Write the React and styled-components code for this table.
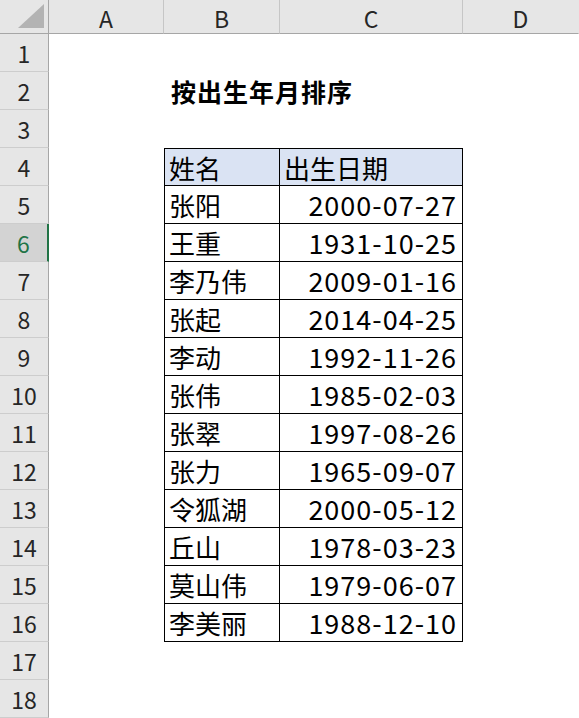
import React from 'react';
import styled, { createGlobalStyle } from 'styled-components';

const GlobalStyle = createGlobalStyle`
  html, body {
    margin: 0;
    padding: 0;
    background: #ffffff;
    overflow: hidden;
  }
`;

const FONT = `"Noto Sans CJK SC", "Noto Sans", sans-serif`;

const Sheet = styled.div`
  display: grid;
  grid-template-columns: 49px 115px 116px 183px 116px;
  grid-template-rows: 34px repeat(18, 38px);
  width: 579px;
  height: 718px;
  font-family: ${FONT};
  background: #ffffff;
`;

const Corner = styled.div`
  background: #e6e6e6;
  border-right: 1px solid #a6a6a6;
  border-bottom: 1px solid #a6a6a6;
  box-sizing: border-box;
  display: flex;
  align-items: flex-end;
  justify-content: flex-end;
  padding: 0 4px 5px 0;
`;

const ColHead = styled.div`
  background: #e6e6e6;
  border-right: 1px solid ${p => (p.$last ? 'transparent' : '#c6c6c6')};
  border-bottom: 1px solid #a6a6a6;
  box-sizing: border-box;
  display: flex;
  align-items: center;
  justify-content: center;
  font-size: 23px;
  color: #262626;
  padding-top: 2px;
`;

const RowHead = styled.div`
  background: ${p => (p.$active ? '#d3d3d3' : '#e6e6e6')};
  color: ${p => (p.$active ? '#217346' : '#262626')};
  border-right: ${p => (p.$active ? '2px solid #217346' : '1px solid #a6a6a6')};
  border-bottom: 1px solid #cdcdcd;
  box-sizing: border-box;
  display: flex;
  align-items: center;
  justify-content: center;
  font-size: 23px;
  padding-top: 1px;
`;

const Cell = styled.div`
  box-sizing: border-box;
  min-width: 0;
  white-space: nowrap;
`;

const Title = styled(Cell)`
  grid-column: span 2;
  display: flex;
  align-items: center;
  padding-left: 7px;
  font-size: 25px;
  font-weight: 700;
  color: #000000;
  letter-spacing: 1px;
`;

const TableCell = styled(Cell)`
  display: flex;
  align-items: center;
  justify-content: ${p => (p.$right ? 'flex-end' : 'flex-start')};
  padding: 0 ${p => (p.$right ? '5px' : '0')} 0 ${p => (p.$right ? '0' : '4px')};
  background: ${p => (p.$head ? '#dae3f3' : '#ffffff')};
  border-right: 1px solid #000000;
  border-bottom: 1px solid #000000;
  border-left: ${p => (p.$first ? '1px solid #000000' : 'none')};
  border-top: ${p => (p.$top ? '1px solid #000000' : 'none')};
  font-size: ${p => (p.$right ? '27px' : '26px')};
  color: #000000;
  letter-spacing: ${p => (p.$right ? '1px' : '0')};
`;

const cols = ['A', 'B', 'C', 'D'];

const people = [
  ['张阳', '2000-07-27'],
  ['王重', '1931-10-25'],
  ['李乃伟', '2009-01-16'],
  ['张起', '2014-04-25'],
  ['李动', '1992-11-26'],
  ['张伟', '1985-02-03'],
  ['张翠', '1997-08-26'],
  ['张力', '1965-09-07'],
  ['令狐湖', '2000-05-12'],
  ['丘山', '1978-03-23'],
  ['莫山伟', '1979-06-07'],
  ['李美丽', '1988-12-10'],
];

const CornerMark = () => (
  <svg width="26" height="24" viewBox="0 0 26 24">
    <polygon points="26,0 26,24 0,24" fill="#b3b3b3" />
  </svg>
);

export default function App() {
  const rows = [];
  for (let r = 1; r <= 18; r++) {
    rows.push(<RowHead key={`h${r}`} $active={r === 6}>{r}</RowHead>);
    if (r === 2) {
      rows.push(<Cell key="a2" />);
      rows.push(<Title key="t">按出生年月排序</Title>);
      rows.push(<Cell key="d2" />);
    } else if (r === 4) {
      rows.push(<Cell key="a4" />);
      rows.push(<TableCell key="b4" $head $first $top>姓名</TableCell>);
      rows.push(<TableCell key="c4" $head $top>出生日期</TableCell>);
      rows.push(<Cell key="d4" />);
    } else if (r >= 5 && r <= 16) {
      const [name, date] = people[r - 5];
      rows.push(<Cell key={`a${r}`} />);
      rows.push(<TableCell key={`b${r}`} $first>{name}</TableCell>);
      rows.push(<TableCell key={`c${r}`} $right>{date}</TableCell>);
      rows.push(<Cell key={`d${r}`} />);
    } else {
      cols.forEach(c => rows.push(<Cell key={`${c}${r}`} />));
    }
  }

  return (
    <>
      <GlobalStyle />
      <Sheet>
        <Corner><CornerMark /></Corner>
        {cols.map((c, i) => (
          <ColHead key={c} $last={i === cols.length - 1}>{c}</ColHead>
        ))}
        {rows}
      </Sheet>
    </>
  );
}
